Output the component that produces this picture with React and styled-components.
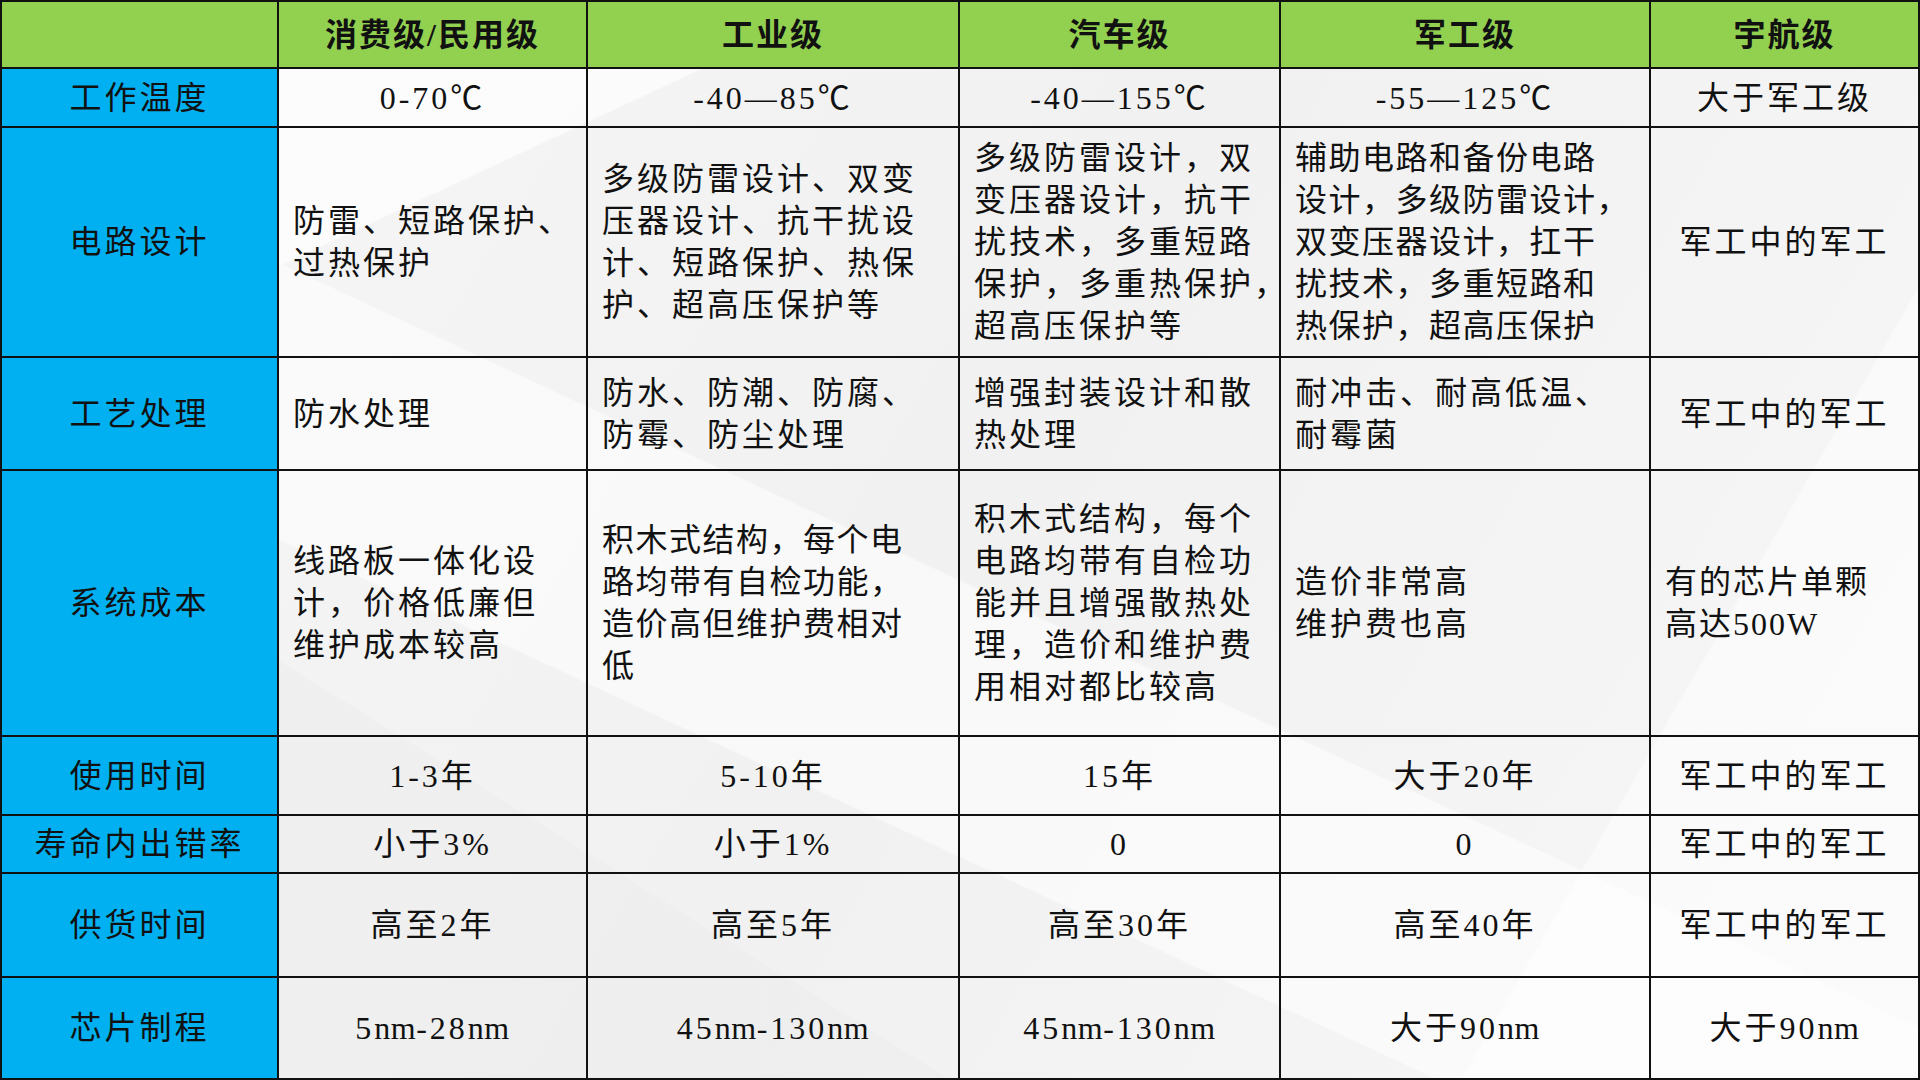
import React from 'react';
import styled, { createGlobalStyle } from 'styled-components';

const GlobalStyle = createGlobalStyle`
  html, body {
    margin: 0;
    padding: 0;
    background: #f3f3f3;
  }
  body {
    font-family: "Liberation Serif", "Noto Sans CJK SC", serif;
    color: #111;
  }
`;

const Page = styled.div`
  width: 1920px;
  height: 1080px;
  overflow: hidden;
  background:
    linear-gradient(155deg, rgba(255, 255, 255, 0.7) 0 20%, transparent 20.1%),
    linear-gradient(205deg, transparent 0 52%, rgba(255, 255, 255, 0.55) 52.1% 66%, transparent 66.1%),
    linear-gradient(32deg, rgba(236, 236, 236, 0.5) 0 26%, transparent 26.1%),
    linear-gradient(300deg, rgba(255, 255, 255, 0.5) 0 18%, transparent 18.1%),
    linear-gradient(120deg, #f6f6f6 0%, #f1f1f1 50%, #f7f7f7 100%);
`;

const Grid = styled.div`
  display: grid;
  grid-template-columns: 279px 309px 372px 321px 370px 269px;
  grid-template-rows: 67px 59px 230px 113px 266px 79px 58px 104px 102px;
  border-top: 2px solid #111;
  box-sizing: border-box;
  width: 1920px;
`;

const Cell = styled.div`
  box-sizing: border-box;
  border-right: 2px solid #111;
  border-bottom: 2px solid #111;
  display: flex;
  flex-direction: column;
  justify-content: center;
  align-items: ${(p) => (p.$left ? 'flex-start' : 'center')};
  padding: ${(p) => (p.$left ? '0 10px 0 14px' : '0 6px')};
  font-size: 32px;
  line-height: 42px;
  letter-spacing: ${(p) => p.$ls || '3px'};
  font-weight: 400;
  color: #111;
  background: ${(p) =>
    p.$kind === 'head' ? '#92d050' : p.$kind === 'side' ? '#00b0f0' : 'transparent'};
  ${(p) => p.$kind === 'side' && 'border-left: 2px solid #111;'}
  ${(p) => p.$kind === 'head' && 'font-weight: 700; letter-spacing: 2px;'}
  ${(p) => p.$corner && 'border-left: 2px solid #111;'}
`;

const Line = styled.span`
  display: block;
  white-space: nowrap;
`;

const Latin = styled.span`
  letter-spacing: 0.5px;
`;

const heads = ['消费级/民用级', '工业级', '汽车级', '军工级', '宇航级'];

const rows = [
  {
    name: '工作温度',
    cells: [['0-70℃'], ['-40—85℃'], ['-40—155℃'], ['-55—125℃'], ['大于军工级']],
  },
  {
    name: '电路设计',
    left: [true, true, true, true, false],
    cells: [
      ['防雷、短路保护、', '过热保护'],
      ['多级防雷设计、双变', '压器设计、抗干扰设', '计、短路保护、热保', '护、超高压保护等'],
      ['多级防雷设计，双', '变压器设计，抗干', '扰技术，多重短路', '保护，多重热保护，', '超高压保护等'],
      ['辅助电路和备份电路', '设计，多级防雷设计，', '双变压器设计，扛干', '扰技术，多重短路和', '热保护，超高压保护'],
      ['军工中的军工'],
    ],
    ls: [null, null, null, '1.5px', null],
  },
  {
    name: '工艺处理',
    left: [true, true, true, true, false],
    cells: [
      ['防水处理'],
      ['防水、防潮、防腐、', '防霉、防尘处理'],
      ['增强封装设计和散', '热处理'],
      ['耐冲击、耐高低温、', '耐霉菌'],
      ['军工中的军工'],
    ],
  },
  {
    name: '系统成本',
    left: [true, true, true, true, true],
    cells: [
      ['线路板一体化设', '计，价格低廉但', '维护成本较高'],
      ['积木式结构，每个电', '路均带有自检功能，', '造价高但维护费相对', '低'],
      ['积木式结构，每个', '电路均带有自检功', '能并且增强散热处', '理，造价和维护费', '用相对都比较高'],
      ['造价非常高', '维护费也高'],
      ['有的芯片单颗', '高达500W'],
    ],
    ls: [null, '1.5px', null, null, '2px'],
  },
  {
    name: '使用时间',
    cells: [['1-3年'], ['5-10年'], ['15年'], ['大于20年'], ['军工中的军工']],
  },
  {
    name: '寿命内出错率',
    cells: [['小于3%'], ['小于1%'], ['0'], ['0'], ['军工中的军工']],
  },
  {
    name: '供货时间',
    cells: [['高至2年'], ['高至5年'], ['高至30年'], ['高至40年'], ['军工中的军工']],
  },
  {
    name: '芯片制程',
    cells: [['5nm-28nm'], ['45nm-130nm'], ['45nm-130nm'], ['大于90nm'], ['大于90nm']],
  },
];

// letters (nm, W) sit tighter than the CJK glyphs
function renderText(text) {
  return text.split(/([A-Za-z]+)/).map((part, i) =>
    /^[A-Za-z]+$/.test(part) ? <Latin key={i}>{part}</Latin> : part
  );
}

export default function App() {
  return (
    <Page>
      <GlobalStyle />
      <Grid>
        <Cell $kind="head" $corner />
        {heads.map((h) => (
          <Cell key={h} $kind="head">
            {h}
          </Cell>
        ))}
        {rows.map((row) => (
          <React.Fragment key={row.name}>
            <Cell $kind="side">{row.name}</Cell>
            {row.cells.map((lines, i) => (
              <Cell
                key={i}
                $left={row.left ? row.left[i] : false}
                $ls={row.ls ? row.ls[i] : null}
              >
                {lines.map((l) => (
                  <Line key={l}>{renderText(l)}</Line>
                ))}
              </Cell>
            ))}
          </React.Fragment>
        ))}
      </Grid>
    </Page>
  );
}
